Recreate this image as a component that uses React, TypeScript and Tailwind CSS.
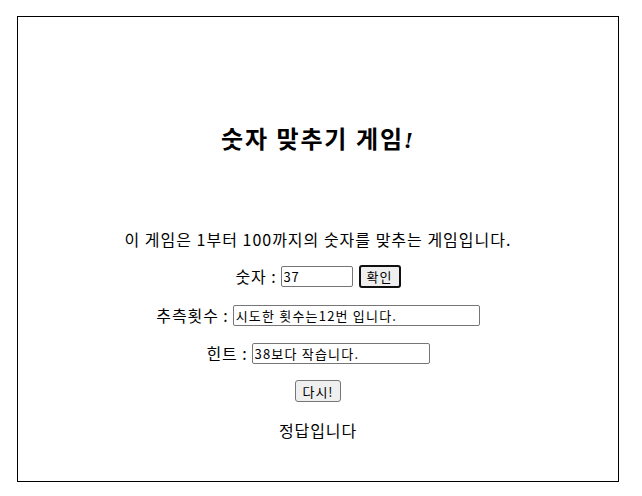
import React from 'react'

const bodyFont = { fontFamily: '"Noto Sans CJK KR", "Noto Sans", sans-serif' }

export default function App() {
  return (
    <div className="w-[642px] h-[496px] bg-white pl-[17px] pt-[16px]">
      <div
        className="w-[602px] h-[466px] border border-black flex flex-col items-center text-black text-[16px] tracking-[0.9px]"
        style={bodyFont}
      >
        <h1 className="mt-[107px] h-[32px] flex items-center text-[24px] font-semibold leading-none tracking-[1.8px] font-['Liberation_Serif','Noto_Sans_CJK_KR',serif]">
          숫자 맞추기 게임<span className="italic">!</span>
        </h1>
        <p className="mt-[71px] h-[24px] flex items-center tracking-[1px]">
          이 게임은 1부터 100까지의 숫자를 맞추는 게임입니다.
        </p>
        <div className="mt-[13px] h-[24px] flex items-center">
          <span>숫자 :</span>
          <input
            readOnly
            value="37"
            className="ml-[4px] w-[72px] h-[21px] border border-[#767676] rounded-[2px] px-[2px] text-[13px] tracking-[0.8px] outline-none"
          />
          <button className="ml-[6px] w-[42px] h-[23px] border-2 border-[#101010] rounded-[3px] bg-[#efefef] text-[13px] tracking-[1px] leading-none">
            확인
          </button>
        </div>
        <div className="mt-[15px] h-[24px] flex items-center">
          <span>추측횟수 :</span>
          <input
            readOnly
            value="시도한 횟수는12번 입니다."
            className="ml-[4px] w-[247px] h-[21px] border border-[#767676] rounded-[2px] px-[2px] text-[13px] tracking-[1.2px] outline-none"
          />
        </div>
        <div className="mt-[14px] h-[24px] flex items-center">
          <span>힌트 :</span>
          <input
            readOnly
            value="38보다 작습니다."
            className="ml-[4px] w-[178px] h-[21px] border border-[#767676] rounded-[2px] px-[2px] text-[13px] tracking-[1.2px] outline-none"
          />
        </div>
        <div className="mt-[14px] h-[24px] flex items-center">
          <button className="w-[46px] h-[22px] border border-[#767676] rounded-[3px] bg-[#efefef] text-[13px] tracking-[1px] leading-none">
            다시!
          </button>
        </div>
        <p className="mt-[15px] h-[24px] flex items-center">정답입니다</p>
      </div>
    </div>
  )
}
